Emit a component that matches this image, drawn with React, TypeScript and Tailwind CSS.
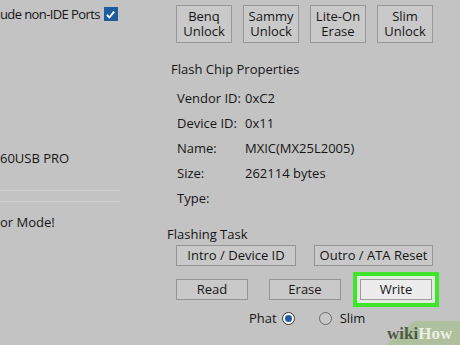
const font = { fontFamily: '"Open Sans", "Noto Sans", sans-serif' };

function TallButton({ top, bottom }: { top: string; bottom: string }) {
  return (
    <div className="flex h-[38px] w-[56px] items-center justify-center border border-[#979797] bg-[#c9c9c9] text-center text-[13px] leading-[15px] text-[#161616]">
      <span>
        {top}
        <br />
        {bottom}
      </span>
    </div>
  );
}

function FlatButton({ label, width }: { label: string; width: string }) {
  return (
    <div className={`flex h-[21px] ${width} items-center justify-center border border-[#959595] bg-[#c9c9c9] text-[13px] text-[#161616]`}>
      {label}
    </div>
  );
}

const props: [string, string][] = [
  ['Vendor ID:', '0xC2'],
  ['Device ID:', '0x11'],
  ['Name:', 'MXIC(MX25L2005)'],
  ['Size:', '262114 bytes'],
  ['Type:', ''],
];

export default function App() {
  return (
    <div style={font} className="relative flex h-[345px] w-[460px] overflow-hidden bg-[#c3c3c3] text-[#161616]">
      {/* left panel (only the right edge of it is in view) */}
      <div className="flex w-[160px] shrink-0 flex-col text-[13px] leading-[18px]">
        <div className="mt-[5px] flex h-[18px] items-center whitespace-nowrap">
          <span className="tracking-[-0.6px]">ude non-IDE Ports</span>
          <span className="ml-[4px] grid h-[14px] w-[14px] shrink-0 place-items-center bg-[#1f5c9e]">
            <svg width="11" height="11" viewBox="0 0 12 12">
              <path d="M2 6.5 L4.8 9.2 L10 2.8" fill="none" stroke="white" strokeWidth="2" />
            </svg>
          </span>
        </div>
        <div className="mt-[126px] h-[18px] whitespace-nowrap">60USB PRO</div>
        <div className="mt-[23px] h-px w-[120px] bg-[#d4d4d4]" />
        <div className="mt-[10px] h-px w-[120px] bg-[#d4d4d4]" />
        <div className="mt-[11px] h-[18px] whitespace-nowrap">or Mode!</div>
      </div>

      {/* right panel */}
      <div className="flex flex-col pl-[16px]">
        <div className="mt-[5px] flex gap-[11px]">
          <TallButton top="Benq" bottom="Unlock" />
          <TallButton top="Sammy" bottom="Unlock" />
          <TallButton top="Lite-On" bottom="Erase" />
          <TallButton top="Slim" bottom="Unlock" />
        </div>

        <div className="-ml-[5px] mt-[17px] h-[18px] text-[13px] leading-[18px]">Flash Chip Properties</div>

        <div className="ml-[1px] mt-[11px] flex flex-col gap-[7px]">
          {props.map(([k, v]) => (
            <div key={k} className="flex h-[18px] text-[13px] leading-[18px]">
              <span className="w-[68px]">{k}</span>
              <span>{v}</span>
            </div>
          ))}
        </div>

        <div className="-ml-[9px] mt-[18px] h-[18px] text-[13px] leading-[18px]">Flashing Task</div>

        <div className="mt-[2px] flex gap-[18px]">
          <FlatButton label="Intro / Device ID" width="w-[120px]" />
          <FlatButton label="Outro / ATA Reset" width="w-[119px]" />
        </div>

        <div className="mt-[6px] flex items-center">
          <FlatButton label="Read" width="w-[72px]" />
          <div className="ml-[21px]">
            <FlatButton label="Erase" width="w-[72px]" />
          </div>
          <div className="ml-[12px] border-4 border-[#3ee52a] bg-[#e2ecdf] p-[3px]">
            <div className="flex h-[21px] w-[72px] items-center justify-center border border-[#9a9a9a] bg-[#ececec] text-[13px]">
              Write
            </div>
          </div>
        </div>

        <div className="ml-[73px] mt-[2px] flex items-center text-[13px]">
          <span>Phat</span>
          <span className="ml-[5px] grid h-[13px] w-[13px] place-items-center rounded-full border border-[#333] bg-white">
            <span className="h-[7px] w-[7px] rounded-full bg-[#1f5c9e]" />
          </span>
          <span className="ml-[24px] h-[13px] w-[13px] rounded-full border border-[#6b6b6b] bg-[#c8c8c8]" />
          <span className="ml-[8px]">Slim</span>
        </div>
      </div>

      {/* watermark */}
      <div className="absolute bottom-0 right-0 flex h-[24px] w-[80px] items-center">
        <div className="absolute inset-0 origin-bottom-left translate-x-[6px] skew-x-[-50deg] bg-[#a9bf93]/80" />
        <span
          className="relative ml-[7px] whitespace-nowrap text-[17px] font-bold leading-none"
          style={{ fontFamily: '"Liberation Serif", serif' }}
        >
          <span className="text-[#4e5a48]">wiki</span>
          <span className="text-[#e9efe2]">How</span>
        </span>
      </div>
    </div>
  );
}
